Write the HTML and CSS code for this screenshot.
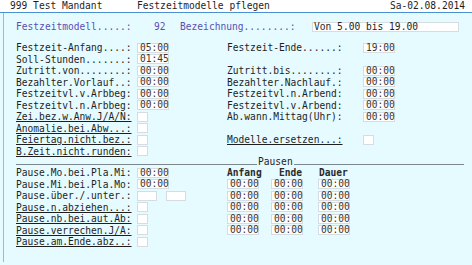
FILE: index.html
```html
<!DOCTYPE html>
<html>
<head>
<meta charset="utf-8">
<link rel="stylesheet" href="styles.css">
</head>
<body>
<div class="title">
  <span class="mandant">999 Test Mandant</span>
  <span class="prog">Festzeitmodelle pflegen</span>
  <span class="date">Sa-02.08.2014</span>
</div>
<div class="main">
  <div class="head-row">
    <span class="hl">Festzeitmodell.....:</span>
    <span class="num">92</span>
    <span class="hl bez">Bezeichnung........:</span>
    <span class="fld txt">Von 5.00 bis 19.00</span>
  </div>

  <div class="rows">
    <div class="row"><span>Festzeit-Anfang....:</span><span><span class="fld">05:00</span></span><span>Festzeit-Ende......:</span><span><span class="fld">19:00</span></span></div>
    <div class="row"><span>Soll-Stunden.......:</span><span><span class="fld">01:45</span></span><span></span><span></span></div>
    <div class="row"><span>Zutritt.von........:</span><span><span class="fld">00:00</span></span><span>Zutritt.bis........:</span><span><span class="fld">00:00</span></span></div>
    <div class="row"><span>Bezahlter.Vorlauf..:</span><span><span class="fld">00:00</span></span><span>Bezahlter.Nachlauf.:</span><span><span class="fld">00:00</span></span></div>
    <div class="row"><span>Festzeitvl.v.Arbbeg:</span><span><span class="fld">00:00</span></span><span>Festzeitvl.n.Arbend:</span><span><span class="fld">00:00</span></span></div>
    <div class="row"><span>Festzeitvl.n.Arbbeg:</span><span><span class="fld">00:00</span></span><span>Festzeitvl.v.Arbend:</span><span><span class="fld">00:00</span></span></div>
    <div class="row"><span class="u">Zei.bez.w.Anw.J/A/N:</span><span><span class="fld chk"></span></span><span>Ab.wann.Mittag(Uhr):</span><span><span class="fld">00:00</span></span></div>
    <div class="row"><span class="u">Anomalie.bei.Abw...:</span><span><span class="fld chk"></span></span><span></span><span></span></div>
    <div class="row"><span class="u">Feiertag.nicht.bez.:</span><span><span class="fld chk"></span></span><span class="u">Modelle.ersetzen...:</span><span><span class="fld chk"></span></span></div>
    <div class="row"><span class="u">B.Zeit.nicht.runden:</span><span><span class="fld chk"></span></span><span></span><span></span></div>
  </div>

  <div class="sep"><span class="line l"></span><span class="sep-t">Pausen</span><span class="line r"></span></div>

  <div class="rows">
    <div class="prow"><span>Pause.Mo.bei.Pla.Mi:</span><span><span class="fld">00:00</span></span><span class="cols hdr"><span class="c1">Anfang</span><span class="c2">Ende</span><span class="c3">Dauer</span></span></div>
    <div class="prow"><span>Pause.Mi.bei.Pla.Mo:</span><span><span class="fld">00:00</span></span><span class="cols"><span class="c1"><span class="fld">00:00</span></span><span class="c2"><span class="fld">00:00</span></span><span class="c3"><span class="fld">00:00</span></span></span></div>
    <div class="prow"><span>Pause.über./.unter.:</span><span class="pair"><span class="fld wide"></span><span class="fld wide"></span></span><span class="cols"><span class="c1"><span class="fld">00:00</span></span><span class="c2"><span class="fld">00:00</span></span><span class="c3"><span class="fld">00:00</span></span></span></div>
    <div class="prow"><span class="u">Pause.n.abziehen...:</span><span><span class="fld chk"></span></span><span class="cols"><span class="c1"><span class="fld">00:00</span></span><span class="c2"><span class="fld">00:00</span></span><span class="c3"><span class="fld">00:00</span></span></span></div>
    <div class="prow"><span class="u">Pause.nb.bei.aut.Ab:</span><span><span class="fld chk"></span></span><span class="cols"><span class="c1"><span class="fld">00:00</span></span><span class="c2"><span class="fld">00:00</span></span><span class="c3"><span class="fld">00:00</span></span></span></div>
    <div class="prow"><span class="u">Pause.verrechen.J/A:</span><span><span class="fld chk"></span></span><span class="cols"><span class="c1"><span class="fld">00:00</span></span><span class="c2"><span class="fld">00:00</span></span><span class="c3"><span class="fld">00:00</span></span></span></div>
    <div class="prow"><span class="u">Pause.am.Ende.abz..:</span><span><span class="fld chk"></span></span><span></span></div>
  </div>
</div>
</body>
</html>
```

FILE: styles.css
```css
html, body {
  margin: 0;
  padding: 0;
}
body {
  width: 472px;
  height: 265px;
  overflow: hidden;
  background: #e6fbff;
  font-family: "DejaVu Sans Mono", "Liberation Mono", monospace;
  font-size: 9.6px;
  color: #1e1e1e;
}
.title {
  height: 12px;
  line-height: 12px;
  background: #ffffff;
  border-bottom: 1px solid #4a8fd6;
  display: flex;
}
.mandant {
  padding-left: 10px;
  width: 127px;
}
.prog {
  flex: 1;
}
.date {
  padding-right: 7px;
}
.main {
  margin-left: 3px;
  border-left: 1px solid #a7b6c2;
  padding-left: 12px;
  height: 249px;
  display: flex;
  flex-direction: column;
}
.head-row {
  display: flex;
  align-items: center;
  height: 11.5px;
  line-height: 11.5px;
  margin-top: 8px;
  color: #5a50b4;
}
.hl {
  width: 121px;
}
.num {
  width: 26px;
  padding-left: 17px;
}
.bez {
  width: 132px;
}
.rows {
  display: flex;
  flex-direction: column;
}
.head-row + .rows {
  margin-top: 9.5px;
}
.row {
  display: grid;
  grid-template-columns: 121px 90px 136px auto;
  height: 11.5px;
  line-height: 11.5px;
  align-items: center;
}
.prow {
  display: grid;
  grid-template-columns: 121px 90px auto;
  height: 11.5px;
  line-height: 11.5px;
  align-items: center;
}
.u {
  text-decoration: underline;
  text-underline-offset: 1px;
}
.fld {
  display: block;
  box-sizing: border-box;
  width: 32px;
  height: 10px;
  line-height: 8px;
  padding-left: 2px;
  background: #ffffff;
  border: 1px solid #d5dde2;
  color: #3b3530;
}
.head-row .fld.txt {
  width: 147px;
  padding-left: 1px;
  color: #1e1e1e;
}
.fld.chk {
  width: 11px;
}
.fld.wide {
  width: 20px;
}
.pair {
  display: flex;
  gap: 9px;
}
.sep {
  display: flex;
  align-items: flex-end;
  height: 10px;
  width: 448px;
}
.sep-t {
  line-height: 10px;
  padding: 0 1px;
}
.line {
  height: 1px;
  background: #7d8790;
  margin-bottom: 2px;
}
.line.l {
  width: 241px;
}
.line.r {
  flex: 1;
}
.cols {
  display: flex;
  align-items: center;
}
.c1 {
  width: 44px;
}
.c2 {
  width: 47px;
}
.hdr {
  font-weight: bold;
  color: #2a2a2a;
}
.hdr .c2 {
  padding-left: 8px;
  width: 39px;
}
.hdr .c3 {
  padding-left: 1px;
}
```
